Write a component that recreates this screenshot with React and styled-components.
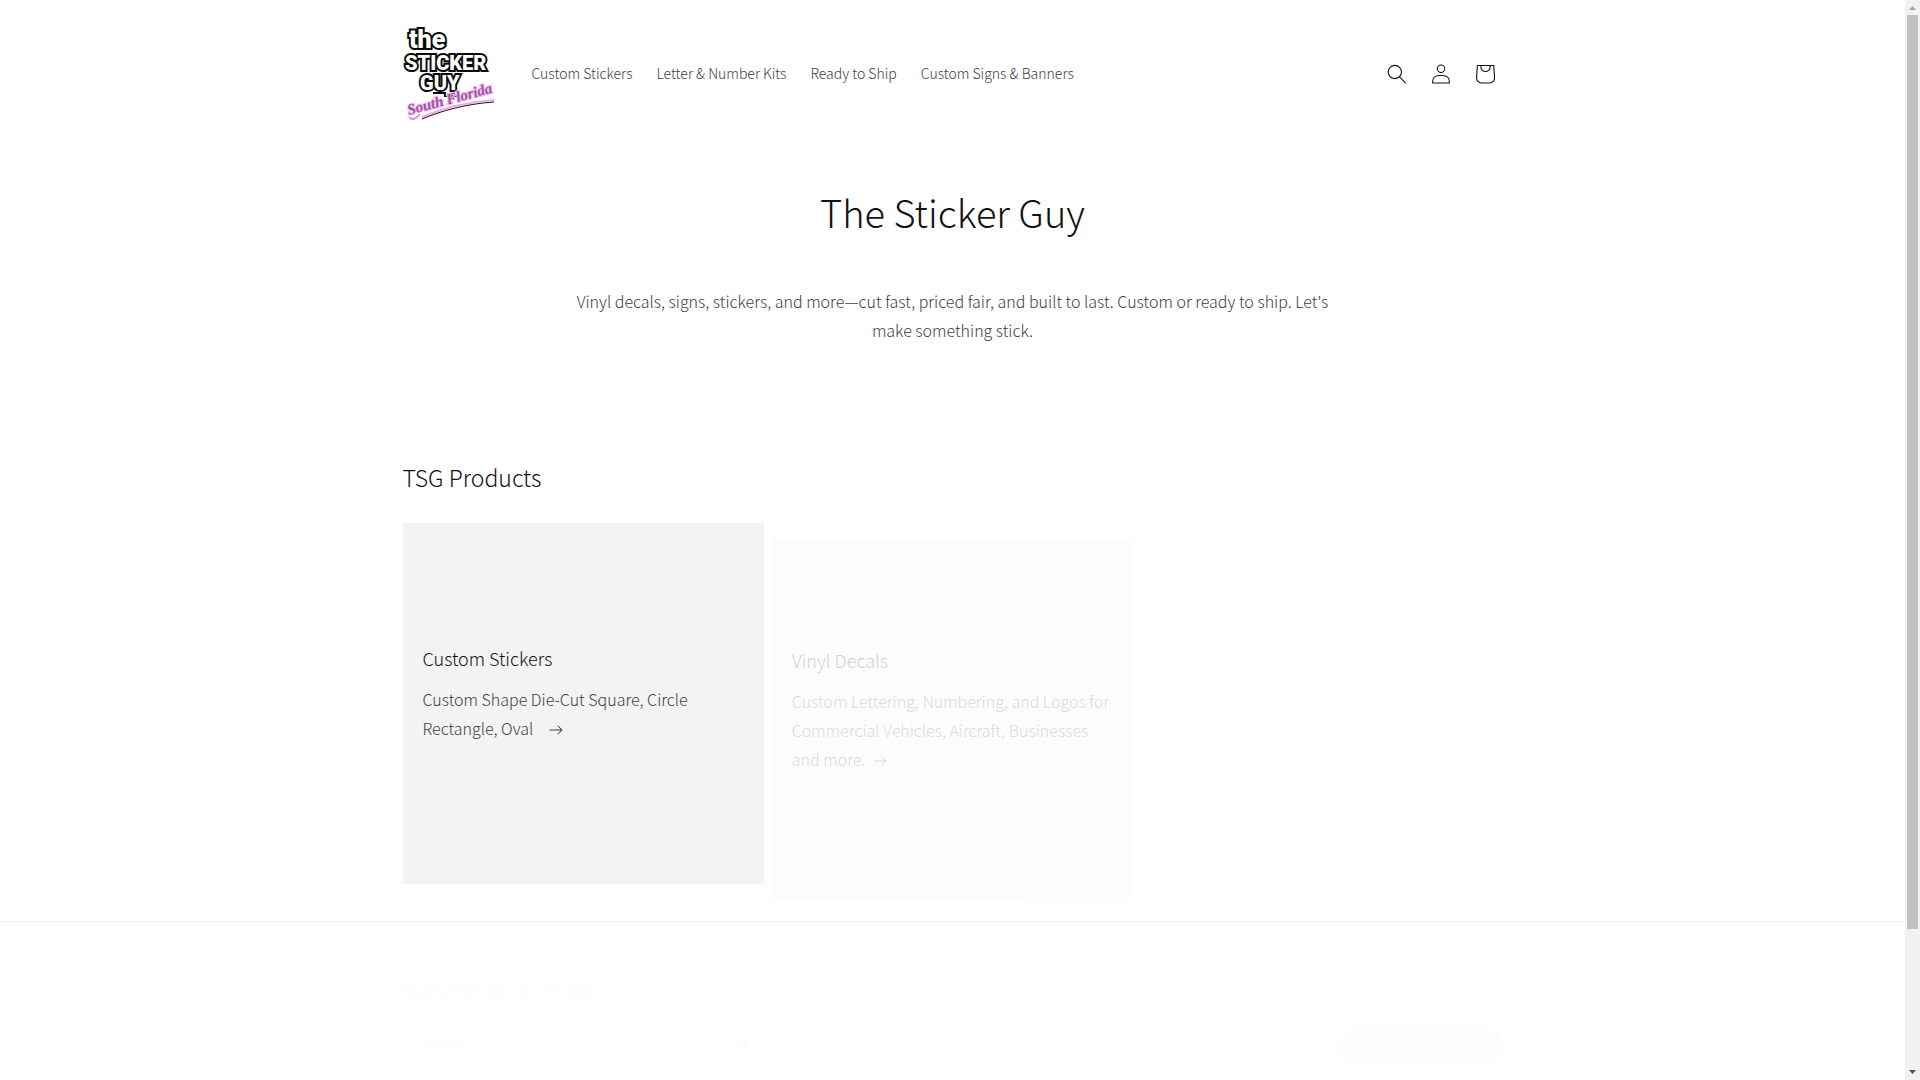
import React from "react";
import styled, { createGlobalStyle } from "styled-components";

const GlobalStyle = createGlobalStyle`
  *, *::before, *::after { box-sizing: border-box; }
  body {
    margin: 0;
    background: #fff;
    color: #404040;
    font-family: "Noto Sans CJK JP", "Noto Sans CJK SC", "Open Sans", sans-serif;
    font-size: 16px;
    font-weight: 300;
    line-height: 29px;
  }
  h1, h2, h3, p, ul { margin: 0; padding: 0; font-weight: inherit; }
  a { color: inherit; text-decoration: none; }
  button, input { font: inherit; }
`;

const Shell = styled.div`
  display: grid;
  grid-template-columns: minmax(0, 1fr) 15px;
  height: 100vh;
  overflow: hidden;
`;

const Page = styled.div`
  min-width: 0;
  overflow: hidden;
`;

const Container = styled.div`
  width: 100%;
  max-width: 1200px;
  margin: 0 auto;
  padding: 0 50px;
`;

const HeaderBar = styled(Container)`
  display: flex;
  align-items: center;
  padding-top: 26px;
  padding-bottom: 26px;
`;

const LogoLink = styled.a`
  display: block;
  width: 92px;
  height: 95px;
  svg { display: block; overflow: visible; }
`;

const Nav = styled.nav`
  flex: 1;
  padding-left: 25px;
`;

const NavList = styled.ul`
  display: flex;
  list-style: none;
`;

const NavLink = styled.a`
  display: block;
  padding: 0 12px;
  font-size: 14px;
`;

const HeaderIcons = styled.div`
  display: flex;
  margin-right: -4px;
`;

const IconButton = styled.button`
  display: flex;
  align-items: center;
  justify-content: center;
  width: 44px;
  height: 44px;
  padding: 0;
  border: 0;
  background: none;
  color: #121212;
`;

const Hero = styled(Container)`
  max-width: 880px;
  padding-top: 33px;
  text-align: center;
`;

const HeroTitle = styled.h1`
  color: #121212;
  font-size: 38px;
  line-height: 64px;
`;

const HeroText = styled.p`
  padding-top: 43px;
`;

const Products = styled(Container)`
  padding-top: 116px;
  padding-bottom: 37px;
`;

const SectionTitle = styled.h2`
  color: #121212;
  font-size: 23px;
  line-height: 32px;
  margin-bottom: 30px;
`;

const CardGrid = styled.ul`
  display: grid;
  grid-template-columns: repeat(3, minmax(0, 1fr));
  gap: 8px;
  list-style: none;
`;

const Card = styled.li`
  display: flex;
  flex-direction: column;
  justify-content: center;
  aspect-ratio: 1;
  padding: 0 20px 18px;
  background: #f3f3f3;
  opacity: ${(p) => p.$opacity};
  transform: translateY(${(p) => p.$shift}px);
`;

const CardTitle = styled.h3`
  color: #121212;
  font-size: 18px;
  line-height: 24px;
  margin-bottom: 15px;
`;

const CardText = styled.p`
  svg { margin-left: ${(p) => p.$gap}px; }
`;

const Footer = styled.footer`
  border-top: 1px solid #ebebeb;
  padding-top: 55px;
`;

const FooterRow = styled(Container)`
  display: flex;
  align-items: flex-end;
  justify-content: space-between;
`;

const Subscribe = styled.form`
  display: flex;
  flex-direction: column;
  width: 360px;
  color: #fcfcfc;
`;

const SubscribeTitle = styled.h2`
  font-size: 18px;
  line-height: 24px;
  margin-bottom: 20px;
`;

const Field = styled.div`
  display: flex;
  align-items: center;
  height: 46px;
  border-bottom: 1px solid #fdfdfd;
`;

const EmailInput = styled.input`
  flex: 1;
  min-width: 0;
  padding: 0 20px;
  border: 0;
  outline: 0;
  background: none;
  color: #fcfcfc;
  &::placeholder { color: #fcfcfc; opacity: 1; }
`;

const SubmitButton = styled(IconButton)`
  color: #fafafa;
`;

const FollowButton = styled.button`
  display: flex;
  align-items: center;
  gap: 8px;
  height: 36px;
  margin-bottom: 3px;
  padding: 0 17px 0 11px;
  border: 0;
  border-radius: 18px;
  background: #fdfdff;
  color: #fff;
  font-family: Inter, sans-serif;
  font-size: 15px;
  font-weight: 600;
  line-height: 20px;
  white-space: nowrap;
`;

const ScrollTrack = styled.div`
  display: flex;
  flex-direction: column;
  background: #f1f1f1;
`;

const ScrollRail = styled.div`
  flex: 1;
  padding: 0 2px;
`;

const ScrollThumb = styled.div`
  height: 87%;
  background: #c1c1c1;
`;

const ScrollArrow = styled.svg`
  display: block;
  flex: none;
`;

const Logo = () => (
  <svg width="92" height="95" viewBox="0 0 92 95" role="img" aria-label="The Sticker Guy South Florida">
    <g
      fontFamily="Roboto, sans-serif"
      fontWeight="900"
      fill="#fff"
      stroke="#0a0a0a"
      strokeWidth="4"
      strokeLinejoin="miter"
      paintOrder="stroke"
    >
      <text x="6" y="22" fontSize="25">the</text>
      <text x="2" y="44" fontSize="20">STICKER</text>
      <text x="17" y="64" fontSize="20">GUY</text>
    </g>
    <path d="M30 67h12v3h13" fill="none" stroke="#0a0a0a" strokeWidth="2" />
    <g
      fontFamily="Liberation Serif, serif"
      fontStyle="italic"
      fontWeight="700"
      fontSize="15"
      transform="rotate(-15 6 90)"
    >
      <text
        x="6"
        y="89"
        fill="#9c559e"
        stroke="#f3c0f2"
        strokeWidth="2"
        paintOrder="stroke"
      >
        South Florida
      </text>
    </g>
    <path d="M6 91c4 5 8 0 11-3" fill="none" stroke="#e58fe4" strokeWidth="2" />
    <path d="M19 91C38 83 62 76 91 74" fill="none" stroke="#efa9ee" strokeWidth="2" />
    <path d="M19 93C38 85 62 78 91 76" fill="none" stroke="#1a101a" strokeWidth="1" />
  </svg>
);

const SearchIcon = () => (
  <svg width="20" height="20" viewBox="0 0 18 19" fill="currentColor" aria-hidden="true">
    <path fillRule="evenodd" d="M11.03 11.68A5.784 5.784 0 112.85 3.5a5.784 5.784 0 018.18 8.18zm.26 1.12a6.78 6.78 0 11.72-.7l5.4 5.4a.5.5 0 11-.71.7l-5.41-5.4z" />
  </svg>
);

const AccountIcon = () => (
  <svg width="20" height="20" viewBox="0 0 18 19" fill="currentColor" aria-hidden="true">
    <path fillRule="evenodd" d="M6 4.5a3 3 0 116 0 3 3 0 01-6 0zm3-4a4 4 0 100 8 4 4 0 000-8zm5.58 12.15c1.12.82 1.83 2.24 1.91 4.85H1.51c.08-2.6.79-4.03 1.9-4.85C4.66 11.75 6.5 11.5 9 11.5s4.35.26 5.58 1.15zM9 10.5c-2.5 0-4.65.24-6.17 1.35C1.27 12.98.5 14.93.5 18v.5h17V18c0-3.07-.77-5.02-2.33-6.15-1.52-1.1-3.67-1.35-6.17-1.35z" />
  </svg>
);

const CartIcon = () => (
  <svg width="44" height="44" viewBox="0 0 40 40" fill="currentColor" aria-hidden="true">
    <path fillRule="evenodd" d="M15.75 11.8h-3.16l-.77 11.6a5 5 0 0 0 4.99 5.34h7.38a5 5 0 0 0 4.99-5.33l-.78-11.61zm0 1h-2.22l-.71 10.67a4 4 0 0 0 3.99 4.27h7.38a4 4 0 0 0 4-4.27l-.72-10.67h-2.22v.63a4.75 4.75 0 1 1-9.5 0zm8.5 0h-7.5v.63a3.75 3.75 0 1 0 7.5 0z" />
  </svg>
);

const ArrowIcon = () => (
  <svg width="14" height="10" viewBox="0 0 14 10" fill="currentColor" aria-hidden="true">
    <path fillRule="evenodd" d="M8.537.808a.5.5 0 01.817-.162l4 4a.5.5 0 010 .708l-4 4a.5.5 0 11-.708-.708L11.793 5.5H1a.5.5 0 010-1h10.793L8.646 1.354a.5.5 0 01-.109-.546z" />
  </svg>
);

const HeartIcon = () => (
  <svg width="18" height="17" viewBox="0 0 18 17" fill="none" stroke="currentColor" strokeWidth="2" aria-hidden="true">
    <path d="M9 15C4 11 1.500 8.500 1.500 5.500a4 4 0 017.500-2 4 4 0 017.500 2C16.500 8.500 14 11 9 15z" />
  </svg>
);

const links = ["Custom Stickers", "Letter & Number Kits", "Ready to Ship", "Custom Signs & Banners"];

const cards = [
  { title: "Custom Stickers", text: "Custom Shape Die-Cut Square, Circle Rectangle, Oval", gap: 16, opacity: 1, shift: 0 },
  { title: "Vinyl Decals", text: "Custom Lettering, Numbering, and Logos for Commercial Vehicles, Aircraft, Businesses and more.", gap: 8, opacity: 0.2, shift: 16 },
];

export default function App() {
  return (
    <>
      <GlobalStyle />
      <Shell>
        <Page>
          <header>
            <HeaderBar>
              <LogoLink href="#"><Logo /></LogoLink>
              <Nav>
                <NavList>
                  {links.map((label) => (
                    <li key={label}><NavLink href="#">{label}</NavLink></li>
                  ))}
                </NavList>
              </Nav>
              <HeaderIcons>
                <IconButton aria-label="Search"><SearchIcon /></IconButton>
                <IconButton aria-label="Log in"><AccountIcon /></IconButton>
                <IconButton aria-label="Cart"><CartIcon /></IconButton>
              </HeaderIcons>
            </HeaderBar>
          </header>
          <main>
            <Hero>
              <HeroTitle>The Sticker Guy</HeroTitle>
              <HeroText>
                Vinyl decals, signs, stickers, and more—cut fast, priced fair, and built to last. Custom or ready to ship. Let's make something stick.
              </HeroText>
            </Hero>
            <Products>
              <SectionTitle>TSG Products</SectionTitle>
              <CardGrid>
                {cards.map((card) => (
                  <Card key={card.title} $opacity={card.opacity} $shift={card.shift}>
                    <CardTitle><a href="#">{card.title}</a></CardTitle>
                    <CardText $gap={card.gap}>
                      {card.text}<ArrowIcon />
                    </CardText>
                  </Card>
                ))}
              </CardGrid>
            </Products>
          </main>
          <Footer>
            <FooterRow>
              <Subscribe>
                <SubscribeTitle>Subscribe to our emails</SubscribeTitle>
                <Field>
                  <EmailInput type="email" placeholder="Email" aria-label="Email" />
                  <SubmitButton type="button" aria-label="Subscribe"><ArrowIcon /></SubmitButton>
                </Field>
              </Subscribe>
              <FollowButton><HeartIcon />Follow on shop</FollowButton>
            </FooterRow>
          </Footer>
        </Page>
        <ScrollTrack aria-hidden="true">
          <ScrollArrow width="15" height="15" viewBox="0 0 15 15"><path d="M4 10h7L7.500 6z" fill="#a3a3a3" /></ScrollArrow>
          <ScrollRail><ScrollThumb /></ScrollRail>
          <ScrollArrow width="15" height="15" viewBox="0 0 15 15"><path d="M4 5h7L7.500 9z" fill="#505050" /></ScrollArrow>
        </ScrollTrack>
      </Shell>
    </>
  );
}
